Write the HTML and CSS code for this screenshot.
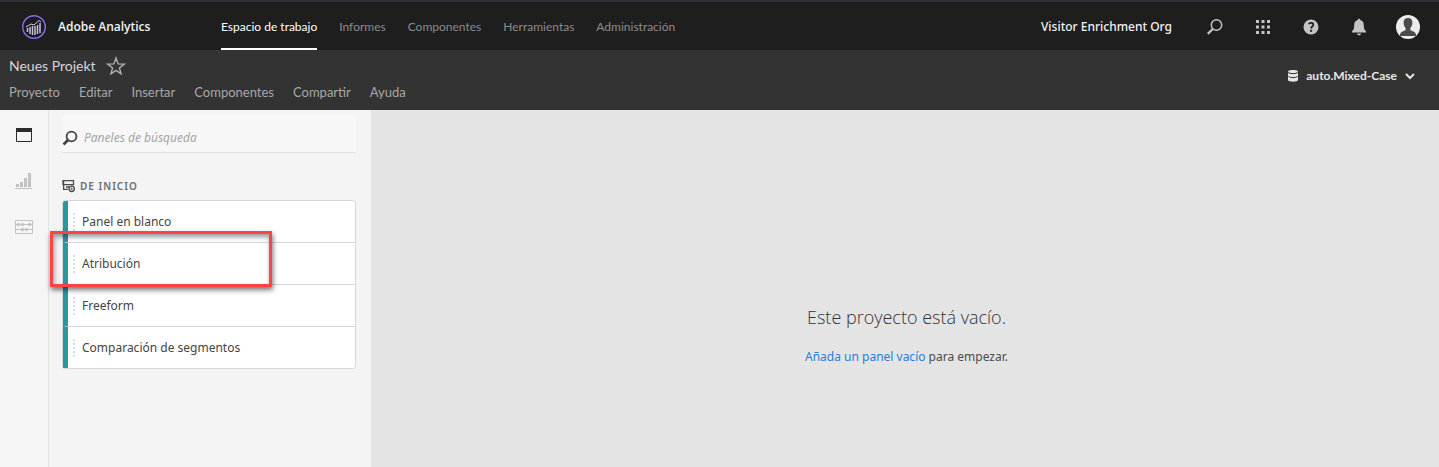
FILE: index.html
```html
<!DOCTYPE html>
<html lang="es">
<head>
<meta charset="utf-8">
<meta name="viewport" content="width=device-width, initial-scale=1">
<title>Adobe Analytics</title>
<link rel="stylesheet" href="styles.css">
</head>
<body>
<header class="topbar">
  <a class="brand" href="#">
    <svg class="brand-logo" width="26" height="26" viewBox="0 0 26 26" aria-hidden="true">
      <circle cx="13" cy="13" r="11.3" fill="#1c1a24" stroke="#8a6fe0" stroke-width="1.4"/>
      <path d="M6.5 14v4M9 13v7M11.500 12v9M14 12v9M16.500 11v9M19 9v10" stroke="#c9c3d6" stroke-width="1.500" fill="none"/>
      <path d="M5 13l5-3 3 1 5-4.500 2 1.500" stroke="#d8d3e6" fill="none"/>
    </svg>
    <span>Adobe Analytics</span>
  </a>
  <nav class="main-nav" aria-label="Principal">
    <a class="main-link main-link-active" href="#" aria-current="page">Espacio de trabajo</a>
    <a class="main-link" href="#">Informes</a>
    <a class="main-link" href="#">Componentes</a>
    <a class="main-link" href="#">Herramientas</a>
    <a class="main-link" href="#">Administración</a>
  </nav>
  <div class="account">
    <button class="org" type="button">Visitor Enrichment Org</button>
    <button class="icon-button" type="button" aria-label="Buscar">
      <svg width="18" height="18" viewBox="0 0 18 18"><circle cx="10.500" cy="7" r="5.200" fill="none" stroke="#c4c4c4" stroke-width="1.500"/><path d="M7 10.700L1.800 15.900" stroke="#c4c4c4" stroke-width="2.200"/></svg>
    </button>
    <button class="icon-button" type="button" aria-label="Soluciones">
      <svg width="18" height="18" viewBox="0 0 18 18" fill="#c4c4c4"><path d="M2 2h3v3H2zM7.500 2h3v3h-3zM13 2h3v3h-3zM2 7.500h3v3H2zM7.500 7.500h3v3h-3zM13 7.500h3v3h-3zM2 13h3v3H2zM7.500 13h3v3h-3zM13 13h3v3h-3z"/></svg>
    </button>
    <button class="icon-button" type="button" aria-label="Ayuda">
      <svg width="18" height="18" viewBox="0 0 18 18"><circle cx="9" cy="9" r="7.500" fill="#c4c4c4"/><path d="M6.700 6.200C7.500 4.300 11.400 4.400 11.300 6.900C11.200 8.500 9.100 8.600 9.100 10.500" fill="none" stroke="#1e1e1e" stroke-width="1.700"/><path d="M8.100 11.800h2v2h-2z" fill="#1e1e1e"/></svg>
    </button>
    <button class="icon-button" type="button" aria-label="Notificaciones">
      <svg width="18" height="18" viewBox="0 0 18 18" fill="#c4c4c4"><path d="M9 .8c.8 0 1.200.5 1.200 1.300 2.500.6 3.600 2.500 3.600 5 0 3.800.7 5 2.200 6.200V14.400H2V13.300C3.500 12.100 4.200 10.900 4.200 7.100c0-2.500 1.100-4.400 3.600-5C7.800 1.300 8.200.8 9 .8zM7 15.400h4c0 2.400-4 2.400-4 0z"/></svg>
    </button>
    <button class="avatar" type="button" aria-label="Cuenta">
      <svg width="24" height="24" viewBox="0 0 24 24"><circle cx="12" cy="12" r="12" fill="#ececec"/><path d="M12 3c3 0 4.600 1.900 4.400 5-.1 2.400-1 3.700-2 5v2c1.400 1.200 5 1.400 5.600 4.500v1.500H4v-1.500c.6-3.100 4.200-3.300 5.600-4.500v-2c-1-1.300-1.900-2.600-2-5C7.400 4.900 9 3 12 3z" fill="#4b4b4b"/></svg>
    </button>
  </div>
</header>

<section class="projectbar">
  <div class="project">
    <div class="project-heading">
      <h1 class="project-title">Neues Projekt</h1>
      <button class="star" type="button" aria-label="Favorito">
        <svg width="20" height="20" viewBox="0 0 20 20"><path d="M10 2l2.100 5.900 6.200.2-4.900 3.800 1.700 6-5.100-3.500-5.100 3.500 1.700-6L1.700 8.100l6.200-.2z" fill="none" stroke="#b0b0b0" stroke-width="1.400"/></svg>
      </button>
    </div>
    <nav class="project-menu" aria-label="Proyecto">
      <a href="#">Proyecto</a>
      <a href="#">Editar</a>
      <a href="#">Insertar</a>
      <a href="#">Componentes</a>
      <a href="#">Compartir</a>
      <a href="#">Ayuda</a>
    </nav>
  </div>
  <button class="suite" type="button">
    <svg width="12" height="14" viewBox="0 0 12 14"><path d="M1 2.500C1 .5 11 .5 11 2.500V11c0 2.300-10 2.300-10 0z" fill="#e6e6e6"/><path d="M1 3.500c1.500 1.500 8.500 1.500 10 0M1.500 7.500c2 1.500 7 1.500 9 0" fill="none" stroke="#333"/></svg>
    <span>auto.Mixed-Case</span>
    <svg width="12" height="12" viewBox="0 0 12 12"><path d="M2 4l4 4 4-4" fill="none" stroke="#e6e6e6" stroke-width="2"/></svg>
  </button>
</section>

<main class="workspace">
  <nav class="rail" aria-label="Paneles laterales">
    <button class="rail-button" type="button" aria-label="Paneles">
      <svg width="18" height="16" viewBox="0 0 18 16"><path d="M1.500 2.500h15v12h-15z" fill="none" stroke="#2c2c2c"/><path d="M1 1h16v4H1z" fill="#2c2c2c"/></svg>
    </button>
    <button class="rail-button" type="button" aria-label="Visualizaciones">
      <svg width="18" height="16" viewBox="0 0 18 16" fill="#c2c2c2"><path d="M1 11h3v3H1zM5 9h3v5H5zM9 5h3v9H9zM13 0h3v14h-3zM0 15h17v1H0z"/></svg>
    </button>
    <button class="rail-button" type="button" aria-label="Componentes">
      <svg width="18" height="16" viewBox="0 0 18 16" fill="#c2c2c2" stroke="#c2c2c2"><path d="M.5 1.500h17v13H.5zM1 5.500h16M1 10.500h16" fill="none"/><circle cx="3.500" cy="5.500" r="1.200"/><circle cx="7.500" cy="5.500" r="1.200"/><circle cx="14.500" cy="5.500" r="1.200"/><circle cx="7.500" cy="10.500" r="1.200"/><circle cx="11.500" cy="10.500" r="1.200"/></svg>
    </button>
  </nav>

  <aside class="sidebar">
    <label class="search">
      <svg width="16" height="16" viewBox="0 0 16 16" aria-hidden="true"><circle cx="9.500" cy="6.500" r="4.900" fill="none" stroke="#444" stroke-width="1.800"/><path d="M6 10l-4.500 4.500" stroke="#444" stroke-width="2.600"/></svg>
      <input class="search-input" type="search" placeholder="Paneles de búsqueda" aria-label="Paneles de búsqueda">
    </label>
    <h2 class="section-title">
      <svg width="14" height="14" viewBox="0 0 14 14" aria-hidden="true" fill="none" stroke="#4b4b4b"><path d="M1 1.700h10.500v4H1zM1.600 1v9.500M1 10.300h5M4 8h3" stroke-width="1.300"/><circle cx="9.700" cy="9.800" r="2.700" stroke-width="1.300"/><path d="M8.500 9.800h2.400M9.700 8.600V11" stroke-width=".8"/></svg>
      <span>De inicio</span>
    </h2>
    <ul class="panels">
      <li class="panel"><span class="grip"></span>Panel en blanco</li>
      <li class="panel"><span class="grip"></span>Atribución<span class="highlight"></span></li>
      <li class="panel"><span class="grip"></span>Freeform</li>
      <li class="panel"><span class="grip"></span>Comparación de segmentos</li>
    </ul>
  </aside>

  <section class="canvas">
    <h2 class="empty-title">Este proyecto está vacío.</h2>
    <p class="empty-text"><a href="#">Añada un panel vacío</a> para empezar.</p>
  </section>
</main>
</body>
</html>
```
FILE: styles.css
```css
* { box-sizing: border-box; }

body {
  margin: 0;
  min-height: 100vh;
  display: flex;
  flex-direction: column;
  font-family: "Noto Sans", "Open Sans", sans-serif;
  font-size: 12px;
  line-height: 20px;
  color: #4b4b4b;
  background: #e4e4e4;
}

h1, h2, p, ul { margin: 0; padding: 0; font-weight: 400; }
ul { list-style: none; }
a { color: inherit; text-decoration: none; }
svg { display: block; flex: none; }
button { border: 0; padding: 0; background: none; color: inherit; font: inherit; cursor: pointer; }

.topbar {
  display: flex;
  height: 50px;
  padding: 0 19px 0 21px;
  border-top: 2px solid #2d3136;
  background: #1e1e1e;
  color: #f2f2f2;
}

.brand {
  display: flex;
  align-items: center;
  gap: 11px;
  width: 200px;
  padding-top: 2px;
  font-family: "Open Sans", sans-serif;
  font-weight: 600;
}

.main-nav { display: flex; gap: 22px; font-family: Lato, sans-serif; font-size: 12px; }

.main-link {
  display: flex;
  align-items: center;
  padding-top: 4px;
  border-bottom: 2px solid transparent;
  color: #8c8c8c;
}

.main-link-active { border-color: #fff; color: #fff; }

.account { display: flex; align-items: center; gap: 30px; margin-left: auto; padding-top: 2px; }
.org { margin-right: 4px; font-weight: 500; }
.avatar { margin-left: -2px; }

.projectbar {
  display: flex;
  justify-content: space-between;
  height: 60px;
  padding: 6px 23px 8px 9px;
  background: #333;
}

.project-heading { display: flex; align-items: center; gap: 10px; }
.project-title { font-family: Lato, sans-serif; font-size: 14px; line-height: 20px; color: #d6d6d6; }
.project-menu { display: flex; gap: 19px; margin-top: 6px; font-family: Lato, sans-serif; font-size: 13px; color: #a8a8a8; }
.suite {
  display: flex;
  align-items: center;
  align-self: flex-start;
  gap: 7px;
  margin-top: 10px;
  font-family: Lato, sans-serif;
  font-weight: 700;
  color: #e6e6e6;
}

.workspace { display: flex; flex: 1; }

.rail {
  display: flex;
  flex-direction: column;
  align-items: center;
  gap: 30px;
  width: 49px;
  padding-top: 17px;
  border-right: 1px solid #e2e2e2;
  background: #f5f5f5;
}

.sidebar { width: 322px; padding: 5px 15px 0 13px; background: #f4f4f4; }

.search {
  display: flex;
  align-items: center;
  gap: 6px;
  height: 38px;
  padding-top: 8px;
  border-bottom: 1px solid #e1e1e1;
  background: #f7f7f7;
}

.search-input {
  flex: 1;
  min-width: 0;
  border: 0;
  padding: 0;
  outline: 0;
  background: none;
  font: inherit;
}

.search-input::placeholder { color: #a6a6a6; font-style: italic; opacity: 1; }

.section-title {
  display: flex;
  align-items: center;
  gap: 4px;
  margin: 23px 0 4px;
  font-size: 10px;
  font-weight: 600;
  letter-spacing: 1px;
  text-transform: uppercase;
  color: #6e6e6e;
}

.panels {
  border: 1px solid #d8d8d8;
  border-radius: 3px;
  background: #fff;
}

.panel {
  position: relative;
  display: flex;
  align-items: center;
  gap: 7px;
  height: 42px;
  padding-left: 5px;
  border-left: 5px solid #2c96a0;
  border-bottom: 1px solid #d8d8d8;
  color: #444;
}

.panel:first-child { border-top-left-radius: 2px; }
.panel:last-child { height: 41px; border-bottom: 0; }
.grip { width: 2px; height: 18px; background: repeating-linear-gradient(#dcdcdc 0 2px, transparent 2px 4px); }

.highlight {
  position: absolute;
  z-index: 1;
  inset: -12px 83px -3px -18px;
  border: 3px solid #fc4444;
  box-shadow: 1px 3px 5px #0008, inset 1px 3px 5px #0006;
  pointer-events: none;
}

.canvas {
  display: flex;
  flex: 1;
  flex-direction: column;
  align-items: center;
  justify-content: center;
  gap: 18px;
  padding: 94px 0 0 3px;
}

.empty-title { font-family: "Open Sans", sans-serif; font-size: 18px; font-weight: 300; line-height: 24px; color: #323232; }
.empty-text a { color: #2680d9; }
```
